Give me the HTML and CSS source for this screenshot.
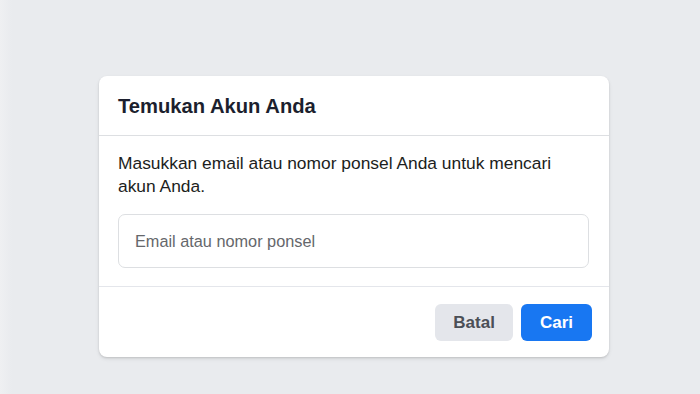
FILE: index.html
```html
<!DOCTYPE html>
<html lang="id">
<head>
<meta charset="utf-8">
<title>Temukan Akun Anda</title>
<link rel="stylesheet" href="styles.css">
</head>
<body>
<div class="edge"></div>
<main class="page">
  <section class="card">
    <header class="card-head">
      <h2 class="title">Temukan Akun Anda</h2>
    </header>
    <div class="card-body">
      <p class="lead">Masukkan email atau nomor ponsel Anda untuk mencari akun Anda.</p>
      <input class="field" type="text" placeholder="Email atau nomor ponsel">
    </div>
    <footer class="card-foot">
      <button class="btn btn-cancel" type="button">Batal</button>
      <button class="btn btn-search" type="button">Cari</button>
    </footer>
  </section>
</main>
</body>
</html>
```
FILE: styles.css
```css
html, body {
  margin: 0;
  padding: 0;
  height: 100%;
}
body {
  background: #e9ebee;
  font-family: "Liberation Sans", Arial, sans-serif;
  color: #1c1e21;
  position: relative;
  overflow: hidden;
}
.edge {
  position: absolute;
  left: 0;
  top: 0;
  bottom: 0;
  width: 12px;
  background: linear-gradient(to right, #eff0f2, #e9ebee);
}
.page {
  position: relative;
  padding: 76px 0 0 99px;
}
.card {
  width: 510px;
  background: #fff;
  border-radius: 8px;
  box-shadow: 0 1px 2px rgba(0,0,0,0.12), 0 2px 4px rgba(0,0,0,0.08);
}
.card-head {
  height: 59px;
  display: flex;
  align-items: center;
  padding: 0 19px;
  border-bottom: 1px solid #dddfe2;
}
.title {
  margin: 0;
  font-size: 20.2px;
  font-weight: bold;
  color: #1c1f2e;
  line-height: 24px;
}
.card-body {
  padding: 16px 19px 18px;
  border-bottom: 1px solid #e4e6eb;
}
.lead {
  margin: 0 0 16px;
  font-size: 17.4px;
  line-height: 23px;
  color: #1c1e21;
  padding-right: 30px;
}
.field {
  display: block;
  box-sizing: border-box;
  width: 471px;
  height: 54px;
  border: 1px solid #dddfe2;
  border-radius: 7px;
  padding: 0 16px;
  font-family: "Liberation Sans", Arial, sans-serif;
  font-size: 16.3px;
  color: #1c1e21;
  outline: none;
}
.field::placeholder {
  color: #65676b;
}
.card-foot {
  display: flex;
  justify-content: flex-end;
  gap: 8px;
  padding: 17px 17px 16px;
}
.btn {
  height: 37px;
  border: none;
  border-radius: 6px;
  font-family: "Liberation Sans", Arial, sans-serif;
  font-size: 17px;
  font-weight: bold;
  cursor: pointer;
}
.btn-cancel {
  background: #e4e6eb;
  color: #4b4f56;
  padding: 0 18px;
}
.btn-search {
  background: #1877f2;
  color: #fff;
  padding: 0 19px;
}
```
